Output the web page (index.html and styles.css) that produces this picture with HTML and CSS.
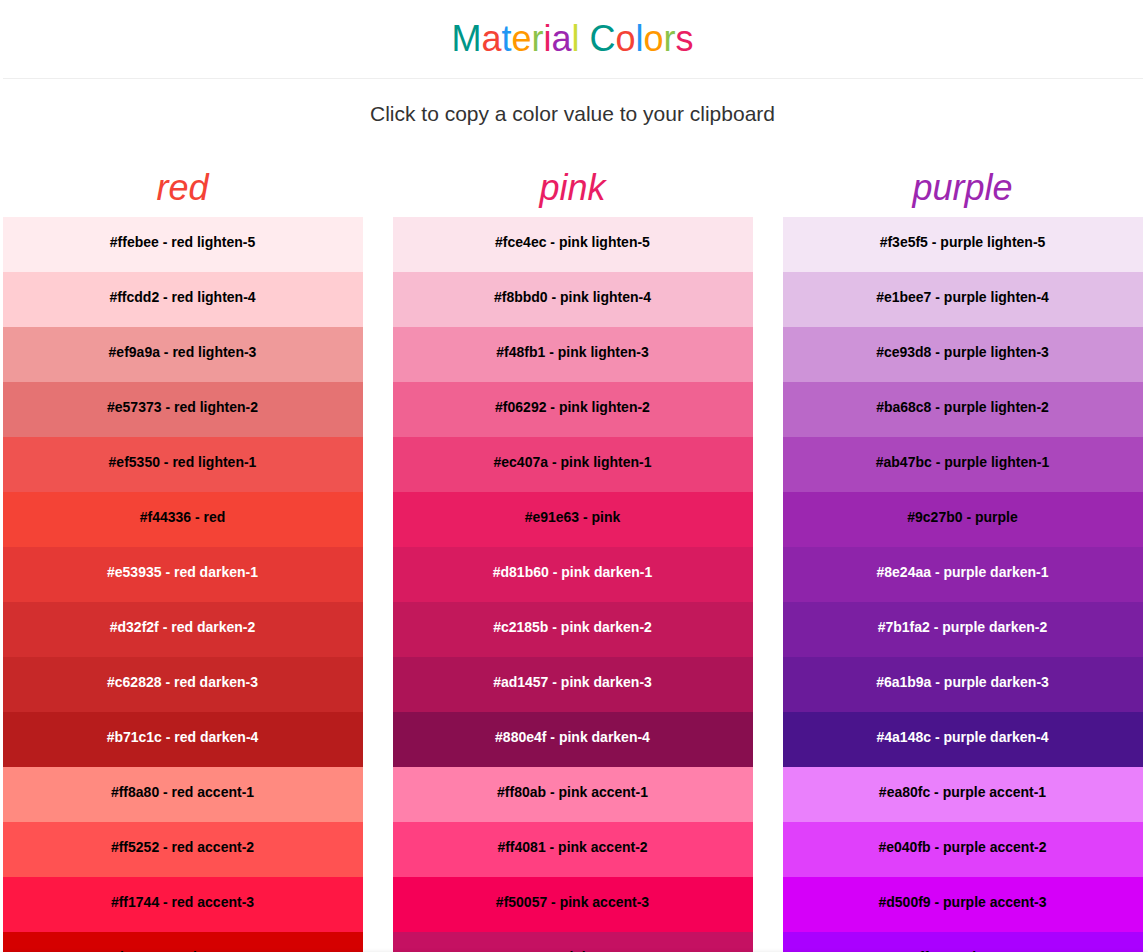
FILE: index.html
```html
<!DOCTYPE html>
<html lang="en">
<head>
<meta charset="utf-8">
<meta name="viewport" content="width=device-width, initial-scale=1">
<title>Material Colors</title>
<link rel="stylesheet" href="styles.css">
</head>
<body>
<div class="page">
  <header class="page-header">
    <h1 class="title"><span class="teal">M</span><span class="red">a</span><span class="blue">t</span><span class="orange">e</span><span class="green">r</span><span class="pink">i</span><span class="purple">a</span><span class="lime">l</span> <span class="teal">C</span><span class="red">o</span><span class="blue">l</span><span class="orange">o</span><span class="green">r</span><span class="pink">s</span></h1>
  </header>
  <p class="lead">Click to copy a color value to your clipboard</p>
  <main class="palettes" id="palettes"></main>
</div>
<div class="snackbar" id="snackbar" role="status"></div>
<script src="script.js"></script>
</body>
</html>
```

FILE: styles.css
```css
* {
  box-sizing: border-box;
}

body {
  margin: 0;
  padding-right: 3px;
  background: #fff;
  color: #333;
  font-family: "Liberation Sans", Arial, sans-serif;
  font-size: 14px;
  line-height: 20px;
}

.page {
  max-width: 1140px;
  margin: 0 auto;
}

.page-header {
  padding: 19px 0;
  border-bottom: 1px solid #eee;
}

.title,
.palette-name {
  margin: 0;
  font-size: 36px;
  line-height: 40px;
  font-weight: 400;
  text-align: center;
}

.palette-name {
  padding-bottom: 9px;
  font-style: italic;
}

.lead {
  margin: 20px 0 39px;
  font-size: 21px;
  line-height: 30px;
  text-align: center;
}

.palettes {
  display: grid;
  grid-template-columns: repeat(3, 1fr);
  gap: 30px;
}

.swatch {
  display: block;
  width: 100%;
  height: 55px;
  padding: 0 0 5px;
  border: 0;
  color: #000;
  font: inherit;
  font-weight: 700;
  text-align: center;
  cursor: pointer;
}

.swatch-dark {
  color: #fff;
}

/* Rests just below the window and slides up after a copy. */
.snackbar {
  position: fixed;
  top: 100%;
  left: 0;
  right: 0;
  height: 50px;
  padding: 15px 20px;
  background: #323232;
  color: #fff;
  box-shadow: 0 0 4px rgba(0, 0, 0, 0.1);
  transition: transform 0.2s;
}

.snackbar-open {
  transform: translateY(-100%);
}

.teal { color: #009688; }
.red { color: #f44336; }
.blue { color: #2196f3; }
.orange { color: #ff9800; }
.green { color: #8bc34a; }
.pink { color: #e91e63; }
.purple { color: #9c27b0; }
.lime { color: #cddc39; }
```

FILE: script.js
```js
const shades = [
  'lighten-5', 'lighten-4', 'lighten-3', 'lighten-2', 'lighten-1', '',
  'darken-1', 'darken-2', 'darken-3', 'darken-4',
  'accent-1', 'accent-2', 'accent-3', 'accent-4'
];

const palettes = {
  red: ['#ffebee', '#ffcdd2', '#ef9a9a', '#e57373', '#ef5350', '#f44336', '#e53935', '#d32f2f', '#c62828', '#b71c1c', '#ff8a80', '#ff5252', '#ff1744', '#d50000'],
  pink: ['#fce4ec', '#f8bbd0', '#f48fb1', '#f06292', '#ec407a', '#e91e63', '#d81b60', '#c2185b', '#ad1457', '#880e4f', '#ff80ab', '#ff4081', '#f50057', '#c51162'],
  purple: ['#f3e5f5', '#e1bee7', '#ce93d8', '#ba68c8', '#ab47bc', '#9c27b0', '#8e24aa', '#7b1fa2', '#6a1b9a', '#4a148c', '#ea80fc', '#e040fb', '#d500f9', '#aa00ff']
};

const root = document.getElementById('palettes');
const snackbar = document.getElementById('snackbar');
let timer;

function copy(color) {
  navigator.clipboard.writeText(color);
  snackbar.textContent = `Copied ${color}`;
  snackbar.classList.add('snackbar-open');
  clearTimeout(timer);
  timer = setTimeout(() => snackbar.classList.remove('snackbar-open'), 2000);
}

for (const [name, colors] of Object.entries(palettes)) {
  const section = document.createElement('section');
  const heading = document.createElement('h2');
  heading.className = `palette-name ${name}`;
  heading.textContent = name;
  section.append(heading);

  colors.forEach((color, i) => {
    const button = document.createElement('button');
    button.type = 'button';
    button.className = shades[i].startsWith('darken') ? 'swatch swatch-dark' : 'swatch';
    button.style.backgroundColor = color;
    button.textContent = `${color} - ${name} ${shades[i]}`.trim();
    button.addEventListener('click', () => copy(color));
    section.append(button);
  });

  root.append(section);
}
```
